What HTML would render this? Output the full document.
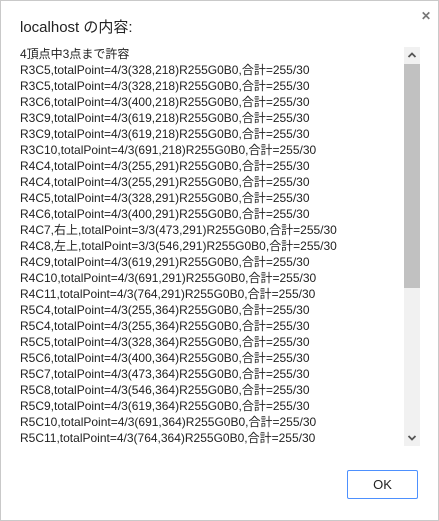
<!DOCTYPE html>
<html><head><meta charset="utf-8"><style>
html,body{margin:0;padding:0;}
body{width:439px;height:521px;background:#fff;position:relative;overflow:hidden;font-family:"Liberation Sans","Noto Sans CJK JP",sans-serif;}
.frame{position:absolute;left:0;top:0;width:437px;height:519px;border:1px solid #c9c9c9;background:#fff;}
.title{position:absolute;left:20px;top:16px;font-size:15px;color:#222;}
.x{position:absolute;left:421px;top:9px;font-size:12px;color:#777;font-weight:bold;}
.msg{position:absolute;left:20px;top:46px;font-size:12px;line-height:16px;color:#222;white-space:pre;}
.sb{position:absolute;left:404px;top:47px;width:16px;height:399px;background:#f1f1f1;}
.thumb{position:absolute;left:404px;top:64px;width:16px;height:224px;background:#c1c1c1;}
.btn{position:absolute;left:347px;top:470px;width:69px;height:27px;border:1px solid #4d90fe;border-radius:2px;font-size:13px;text-align:center;line-height:27px;color:#222;background:#fff;}
</style></head><body>
<div class="frame"></div>
<div class="title">localhost の内容:</div>
<div class="x">✕</div>
<div class="msg">4頂点中3点まで許容
R3C5,totalPoint=4/3(328,218)R255G0B0,合計=255/30
R3C5,totalPoint=4/3(328,218)R255G0B0,合計=255/30
R3C6,totalPoint=4/3(400,218)R255G0B0,合計=255/30
R3C9,totalPoint=4/3(619,218)R255G0B0,合計=255/30
R3C9,totalPoint=4/3(619,218)R255G0B0,合計=255/30
R3C10,totalPoint=4/3(691,218)R255G0B0,合計=255/30
R4C4,totalPoint=4/3(255,291)R255G0B0,合計=255/30
R4C4,totalPoint=4/3(255,291)R255G0B0,合計=255/30
R4C5,totalPoint=4/3(328,291)R255G0B0,合計=255/30
R4C6,totalPoint=4/3(400,291)R255G0B0,合計=255/30
R4C7,右上,totalPoint=3/3(473,291)R255G0B0,合計=255/30
R4C8,左上,totalPoint=3/3(546,291)R255G0B0,合計=255/30
R4C9,totalPoint=4/3(619,291)R255G0B0,合計=255/30
R4C10,totalPoint=4/3(691,291)R255G0B0,合計=255/30
R4C11,totalPoint=4/3(764,291)R255G0B0,合計=255/30
R5C4,totalPoint=4/3(255,364)R255G0B0,合計=255/30
R5C4,totalPoint=4/3(255,364)R255G0B0,合計=255/30
R5C5,totalPoint=4/3(328,364)R255G0B0,合計=255/30
R5C6,totalPoint=4/3(400,364)R255G0B0,合計=255/30
R5C7,totalPoint=4/3(473,364)R255G0B0,合計=255/30
R5C8,totalPoint=4/3(546,364)R255G0B0,合計=255/30
R5C9,totalPoint=4/3(619,364)R255G0B0,合計=255/30
R5C10,totalPoint=4/3(691,364)R255G0B0,合計=255/30
R5C11,totalPoint=4/3(764,364)R255G0B0,合計=255/30</div>
<div class="sb"></div>
<div class="thumb"></div>
<svg style="position:absolute;left:404px;top:47px" width="16" height="17"><path d="M4.5 10 L8 6.5 L11.5 10" stroke="#555" stroke-width="1.8" fill="none"/></svg>
<svg style="position:absolute;left:404px;top:429px" width="16" height="17"><path d="M4.5 7 L8 10.5 L11.5 7" stroke="#555" stroke-width="1.8" fill="none"/></svg>
<div class="btn">OK</div>
</body></html>
